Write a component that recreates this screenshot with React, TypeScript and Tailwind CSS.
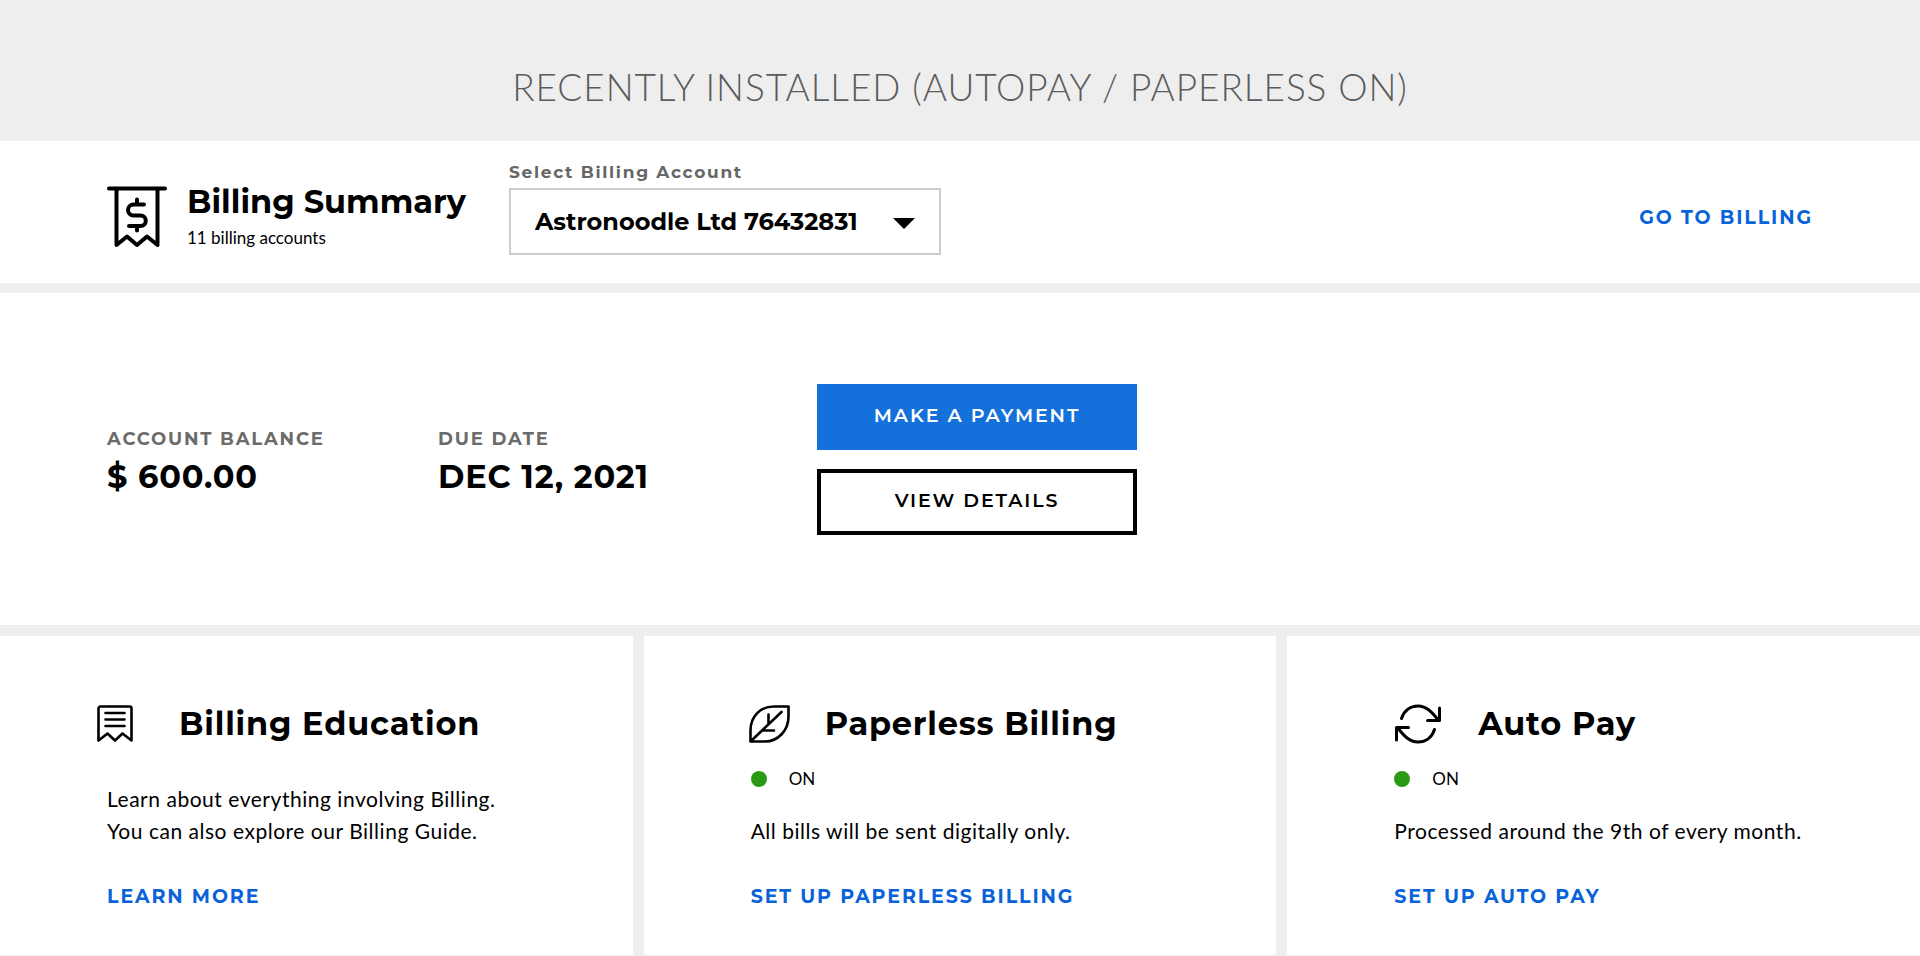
import type { ReactNode } from "react";

const linkClass =
  "font-['Montserrat','Inter',sans-serif] text-[19px] leading-6 font-bold tracking-widest text-[#0963d8] uppercase hover:underline";

const headingClass =
  "font-['Montserrat','Inter',sans-serif] text-[32px] leading-10 font-bold";

function BillIcon() {
  return (
    <svg
      width="60"
      height="62"
      viewBox="0 0 60 62"
      fill="none"
      stroke="currentColor"
      strokeWidth="4"
      strokeLinecap="round"
      strokeLinejoin="round"
      aria-hidden="true"
    >
      <path d="M2 3.500H58" />
      <path d="M9.500 4V60L20 51.500L30 60L40 51.500L50.500 60V4" />
      <path d="M30 14.500V19.500M30 41V45.500M37 19.500H26.500A5.500 5.500 0 0 0 26.500 30.500H33.500A5.200 5.200 0 0 1 33.500 41H22" />
    </svg>
  );
}

function ReceiptIcon() {
  return (
    <svg
      width="36"
      height="38"
      viewBox="0 0 36 38"
      fill="none"
      stroke="currentColor"
      strokeWidth="2.6"
      strokeLinecap="round"
      strokeLinejoin="round"
      aria-hidden="true"
    >
      <path d="M1.500 35.500V3.500A2 2 0 0 1 3.500 1.500H32.500A2 2 0 0 1 34.500 3.500V35.500L25.500 28.500L18 35.500L10.500 28.500Z" />
      <path d="M8.500 8H27.500M8.500 14.500H27.500M8.500 21H27.500" />
    </svg>
  );
}

function LeafIcon() {
  return (
    <svg
      width="41"
      height="38"
      viewBox="0 0 41 38"
      fill="none"
      stroke="currentColor"
      strokeWidth="2.6"
      strokeLinecap="round"
      strokeLinejoin="round"
      aria-hidden="true"
    >
      <path d="M1.500 36.500V25.500C1.500 11 11.500 1.500 25 1.500H39.500V11.500C39.500 25.500 29 36.500 16 36.500Z" />
      <path d="M2 36L32.500 7M19.500 9.500V19M14 25.500H25" />
    </svg>
  );
}

function CycleIcon() {
  return (
    <svg
      width="48"
      height="40"
      viewBox="0 0 48 40"
      fill="none"
      stroke="currentColor"
      strokeWidth="3"
      strokeLinecap="round"
      strokeLinejoin="round"
      aria-hidden="true"
    >
      <path d="M7.500 14.500C10 6.500 16.500 2 24 2C32.500 2 38.500 8.500 44.500 16.500" />
      <path d="M45.500 4V16.500H33.500" />
      <path d="M40.500 25.500C38 33.500 31.500 38 24 38C15.500 38 9.500 31.500 3.500 23.500" />
      <path d="M2.500 36V23.500H14.500" />
    </svg>
  );
}

interface CardProps {
  icon: ReactNode;
  iconClass: string;
  title: string;
  on?: boolean;
  lines: string[];
  action: string;
}

function Card({ icon, iconClass, title, on = false, lines, action }: CardProps) {
  return (
    <section className="flex flex-col bg-white pt-[68px] pr-6 pb-9 pl-[107px]">
      <div className="flex h-10 items-center">
        <span className={iconClass}>{icon}</span>
        <h2 className={`tracking-wide ${headingClass}`}>{title}</h2>
      </div>
      <div className="flex min-h-[103px] flex-col pt-[23px]">
        {on && (
          <p className="flex items-center gap-[22px] text-[17px] leading-6">
            <span className="size-4 rounded-full bg-[#2a9a14]" />
            ON
          </p>
        )}
        <div className="mt-auto text-[21px] leading-8 tracking-wide">
          {lines.map((line) => (
            <p key={line}>{line}</p>
          ))}
        </div>
      </div>
      <a href="#" className={`mt-[38px] self-start ${linkClass}`}>
        {action}
      </a>
    </section>
  );
}

function Stat({ label, value }: { label: string; value: string }) {
  return (
    <div className="font-['Montserrat','Inter',sans-serif]">
      <dt className="text-lg leading-6 font-bold tracking-widest text-[#6b6b6b] uppercase">
        {label}
      </dt>
      <dd className="mt-1 text-[32px] leading-11 font-bold tracking-wide">{value}</dd>
    </div>
  );
}

export default function App() {
  return (
    <div className="flex min-h-screen flex-col bg-[#eeeeee] font-['Lato',sans-serif] text-black">
      <header className="flex h-[141px] items-end justify-center pb-[30px]">
        <h1 className="text-[37px] leading-12 font-light tracking-wide text-[#5c5c5c] uppercase">
          Recently installed (Autopay / Paperless on)
        </h1>
      </header>

      <section className="flex h-[142px] items-center bg-white px-[107px]">
        <div className="flex w-[402px] items-center gap-5 pt-2">
          <BillIcon />
          <div>
            <h2 className={`whitespace-nowrap ${headingClass}`}>Billing Summary</h2>
            <p className="mt-1 text-[17px] leading-6">11 billing accounts</p>
          </div>
        </div>
        <div className="flex w-[432px] flex-col gap-1 pb-[10px]">
          <label
            htmlFor="account"
            className="font-['Montserrat','Inter',sans-serif] text-[17px] leading-6 font-bold tracking-widest text-[#666666]"
          >
            Select Billing Account
          </label>
          <div className="relative">
            <select
              id="account"
              className="h-[67px] w-full appearance-none border-2 border-[#cccccc] bg-white px-6 pt-0.5 font-['Montserrat','Inter',sans-serif] text-2xl font-bold"
            >
              <option>Astronoodle Ltd 76432831</option>
            </select>
            <svg
              className="pointer-events-none absolute top-[30px] right-[26px]"
              width="22"
              height="11"
              viewBox="0 0 22 11"
              aria-hidden="true"
            >
              <path d="M0 0H22L11 11Z" />
            </svg>
          </div>
        </div>
        <a href="#" className={`ml-auto pt-3 ${linkClass}`}>
          Go to billing
        </a>
      </section>

      <section className="mt-[10px] flex h-[332px] items-center bg-white px-[107px]">
        <dl className="grid w-[710px] grid-cols-[331px_1fr] pt-2">
          <Stat label="Account balance" value="$ 600.00" />
          <Stat label="Due date" value="DEC 12, 2021" />
        </dl>
        <div className="flex w-80 flex-col gap-[19px] font-['Montserrat','Inter',sans-serif] text-[19px] font-semibold tracking-widest">
          <button type="button" className="h-[66px] bg-[#1470da] text-white uppercase">
            Make a payment
          </button>
          <button type="button" className="h-[66px] border-4 border-black bg-white uppercase">
            View details
          </button>
        </div>
      </section>

      <div className="mt-[11px] mb-px grid flex-1 grid-cols-3 gap-[11px]">
        <Card
          icon={<ReceiptIcon />}
          iconClass="-ml-[10px] w-[82px]"
          title="Billing Education"
          lines={["Learn about everything involving Billing.", "You can also explore our Billing Guide."]}
          action="Learn more"
        />
        <Card
          icon={<LeafIcon />}
          iconClass="-ml-[2px] w-[76px]"
          title="Paperless Billing"
          on
          lines={["All bills will be sent digitally only."]}
          action="Set up paperless billing"
        />
        <Card
          icon={<CycleIcon />}
          iconClass="w-[84px]"
          title="Auto Pay"
          on
          lines={["Processed around the 9th of every month."]}
          action="Set up auto pay"
        />
      </div>
    </div>
  );
}
